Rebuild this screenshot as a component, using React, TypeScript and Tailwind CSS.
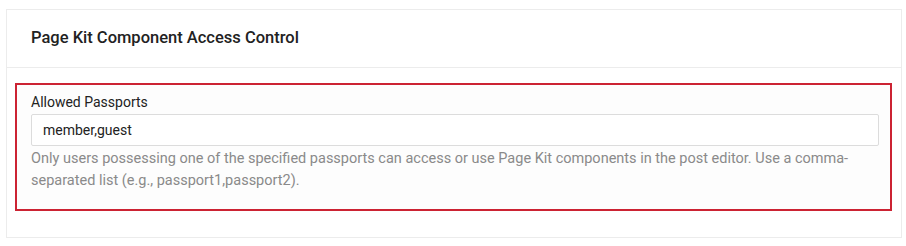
export default function App() {
  return (
    <div className="w-[906px] h-[246px] bg-white pt-[9px] pl-[6px] pr-[4px]" style={{ fontFamily: "Roboto, 'Liberation Sans', sans-serif" }}>
      <div className="border border-[#ececec] bg-white h-[229px] flex flex-col">
        <div className="h-[58px] border-b border-[#ececec] flex items-center px-[24px]">
          <h2 className="text-[16.5px] font-medium text-[#222]">Page Kit Component Access Control</h2>
        </div>
        <div className="pt-[15px] pl-[8px] pr-[9px]">
          <div className="border-2 border-[#cc2333] bg-[#fdfdfd] h-[128px] pl-[14px] pr-[11px] pt-[7px]">
            <label className="block text-[14px] leading-[20px] text-[#222]">Allowed Passports</label>
            <div className="mt-[2px] h-[32px] border border-[#dcdcdc] rounded-[2px] bg-white flex items-center px-[11px] text-[14px] text-[#222]">
              member,guest
            </div>
            <p className="mt-[2px] text-[14.5px] leading-[22px] text-[#8a8a8a]">
              Only users possessing one of the specified passports can access or use Page Kit components in the post editor. Use a comma-separated list (e.g., passport1,passport2).
            </p>
          </div>
        </div>
      </div>
    </div>
  );
}
